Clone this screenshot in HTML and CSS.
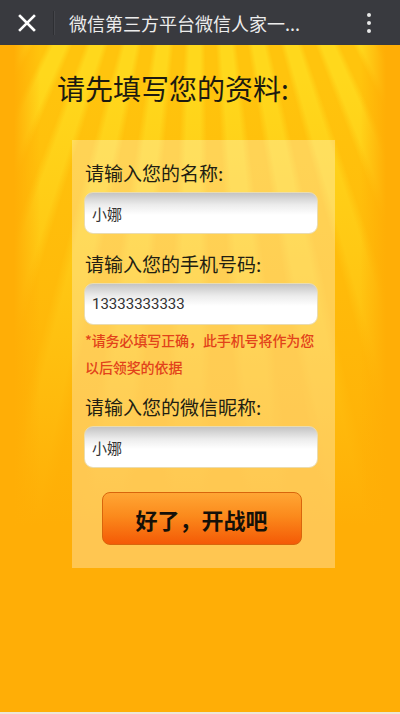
FILE: index.html
```html
<!DOCTYPE html>
<html>
<head>
    <meta charset="UTF-8">
    <title>微信第三方平台微信人家一</title>
    <link rel="stylesheet" href="styles.css">
</head>
<body>
    <div class="topbar">
        <span class="close">
            <svg width="18" height="18" viewBox="0 0 18 18">
                <path d="M2 2 L16 16 M16 2 L2 16" stroke="#fff" stroke-width="2.6" stroke-linecap="square"/>
            </svg>
        </span>
        <span class="divider"></span>
        <span class="title">微信第三方平台微信人家一...</span>
        <span class="more"><i></i><i></i><i></i></span>
    </div>

    <div class="stage">
        <h1>请先填写您的资料:</h1>

        <div class="panel">
            <label class="field-label">请输入您的名称:</label>
            <div class="field">小娜</div>

            <label class="field-label">请输入您的手机号码:</label>
            <div class="field digits">13333333333</div>
            <p class="note">*请务必填写正确，此手机号将作为您以后领奖的依据</p>

            <label class="field-label">请输入您的微信昵称:</label>
            <div class="field">小娜</div>

            <div class="actions">
                <button class="go">好了，开战吧</button>
            </div>
        </div>
    </div>
</body>
</html>
```

FILE: styles.css
```css
body {
    margin: 0;
    background-color: #ece6da;
    font-family: "Noto Sans CJK SC", "Noto Sans", sans-serif;
    height: 714px;
    overflow: hidden;
}
.topbar {
    height: 45px;
    background-color: #393a3f;
    display: flex;
    align-items: center;
    color: #ececec;
}
.close {
    width: 53px;
    display: flex;
    justify-content: center;
}
.divider {
    width: 1px;
    height: 24px;
    background-color: #2e2f33;
    box-shadow: 1px 0 0 #45464b;
}
.title {
    flex: 1;
    padding-left: 15px;
    font-size: 18px;
    white-space: nowrap;
}
.more {
    width: 62px;
    display: flex;
    flex-direction: column;
    align-items: center;
    gap: 4px;
}
.more i {
    display: block;
    width: 4px;
    height: 4px;
    border-radius: 50%;
    background-color: #e8e8e8;
}
.stage {
    height: 667px;
    background-color: #ffae06;
    background-image:
        linear-gradient(to right, #ffae06 14px, rgba(255,174,6,0) 40px, rgba(255,174,6,0) 360px, #ffae06 386px),
        linear-gradient(to bottom, rgba(255,174,6,0) 30px, rgba(255,174,6,0.45) 250px, #ffae06 480px),
        repeating-conic-gradient(from 180deg at 50% -300px, #ffd81c 0deg, #ffd81c 2deg, #ffc40d 3deg, #ffc40d 5deg, #ffd81c 6deg);
    padding-top: 25px;
    box-sizing: border-box;
}
h1 {
    margin: 0 0 34px 57px;
    font-size: 28px;
    line-height: 36px;
    font-weight: normal;
    color: #1c1a10;
}
.panel {
    margin-left: 72px;
    width: 263px;
    box-sizing: border-box;
    padding: 20px 17px 23px 12px;
    background-color: rgba(255,255,255,0.3);
}
.field-label {
    display: block;
    margin: 0 0 6px 1px;
    font-size: 19px;
    line-height: 26px;
    color: #221e12;
}
.field {
    height: 42px;
    box-sizing: border-box;
    border: 1px solid #eadcb0;
    border-radius: 9px;
    background: linear-gradient(to bottom, #c4c4c4 0, #ececec 12px, #fff 22px, #fff 100%);
    padding-left: 7px;
    display: flex;
    align-items: center;
    font-size: 15px;
    color: #333;
    margin-bottom: 17px;
}
.field.digits {
    font-family: Roboto, "Noto Sans CJK SC", sans-serif;
    margin-bottom: 2px;
}
.note {
    margin: 0 0 13px 1px;
    font-size: 14px;
    line-height: 27px;
    font-weight: 500;
    color: #e2421a;
    letter-spacing: -0.1px;
}
.actions {
    padding-top: 7px;
    display: flex;
    justify-content: center;
}
.go {
    width: 200px;
    height: 53px;
    margin-left: 1px;
    border: 1px solid #d9650c;
    border-radius: 8px;
    background: linear-gradient(to bottom, #ffa634 0, #fb8a1c 45%, #f45a06 100%);
    font-family: "Noto Sans CJK SC", sans-serif;
    font-size: 22px;
    font-weight: bold;
    color: #141008;
}
```
